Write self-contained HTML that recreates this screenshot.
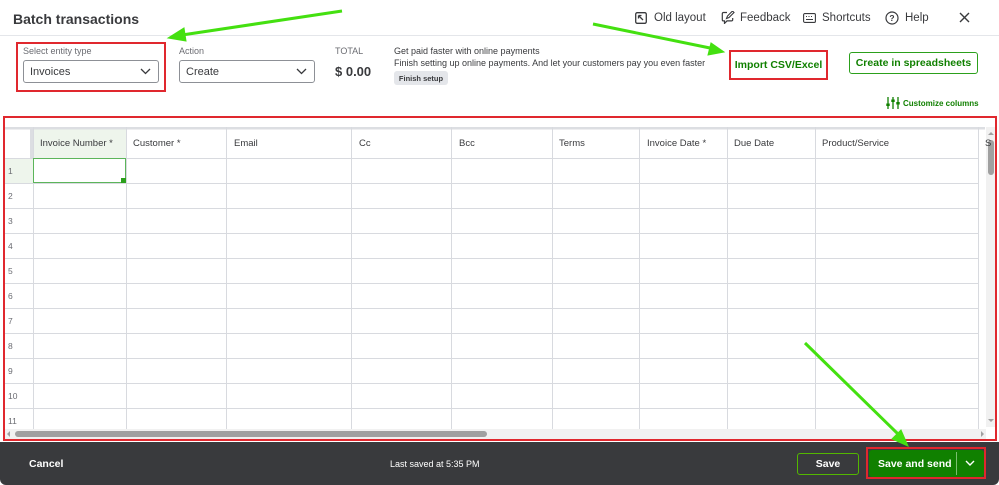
<!DOCTYPE html>
<html><head><meta charset="utf-8"><style>
*{box-sizing:border-box;margin:0;padding:0}
body{width:999px;height:485px;overflow:hidden;background:#fff;font-family:"Liberation Sans",Arial,sans-serif;color:#393a3d;position:relative}
.a{position:absolute;white-space:nowrap}
.sel{position:absolute;border:1px solid #8d9096;border-radius:3px;height:23px;font-size:11px;padding:5px 6px;color:#393a3d}
.sel svg{position:absolute;right:7px;top:7px}
.btn{position:absolute;border:1.5px solid #2ca01c;border-radius:3px;color:#108000;font-weight:bold;font-size:11px;display:flex;align-items:center;justify-content:center}
.hd{font-size:9.5px;color:#393a3d}
.rn{position:absolute;left:8px;font-size:8.5px;color:#6b6c72}
.cen{display:flex;align-items:center;justify-content:center}
</style></head><body>
<div class="a" style="left:13px;top:11px;font-size:14px;font-weight:bold;color:#393a3d">Batch transactions</div>
<div class="a" style="left:0;top:35px;width:999px;height:1px;background:#e4e6ea"></div>
<svg class="a" style="left:635px;top:12px" width="12" height="12" viewBox="0 0 12 12"><rect x="0.7" y="0.7" width="10.6" height="10.6" rx="1.5" fill="none" stroke="#393a3d" stroke-width="1.3"/><path d="M8 8L3.5 3.5M3.5 3.5h3M3.5 3.5v3" stroke="#393a3d" stroke-width="1.3" fill="none"/></svg>
<div class="a" style="left:654px;top:12px;font-size:11.5px">Old layout</div>
<svg class="a" style="left:721px;top:11px" width="14" height="13" viewBox="0 0 14 13"><path d="M6 1.5H2.5A1.2 1.2 0 0 0 1.3 2.7v6a1.2 1.2 0 0 0 1.2 1.2h1v2.5l2.5-2.5h4.5a1.2 1.2 0 0 0 1.2-1.2V7" fill="none" stroke="#393a3d" stroke-width="1.2"/><path d="M5.5 7.5l1-2.5 5-5 1.5 1.5-5 5z" fill="none" stroke="#393a3d" stroke-width="1.1"/></svg>
<div class="a" style="left:740px;top:12px;font-size:11.5px">Feedback</div>
<svg class="a" style="left:803px;top:13px" width="13" height="10" viewBox="0 0 13 10"><rect x="0.6" y="0.6" width="11.8" height="8.8" rx="1.2" fill="none" stroke="#393a3d" stroke-width="1.1"/><path d="M3 3.5h1M5.5 3.5h1M8 3.5h1M3 6.5h7" stroke="#393a3d" stroke-width="1"/></svg>
<div class="a" style="left:822px;top:12px;font-size:11.5px">Shortcuts</div>
<svg class="a" style="left:885px;top:11px" width="14" height="14" viewBox="0 0 14 14"><circle cx="7" cy="7" r="6" fill="none" stroke="#393a3d" stroke-width="1.2"/><text x="7" y="10.2" font-size="8.5" font-weight="bold" text-anchor="middle" fill="#393a3d" font-family="Liberation Sans">?</text></svg>
<div class="a" style="left:905px;top:12px;font-size:11.5px">Help</div>
<svg class="a" style="left:959px;top:12px" width="11" height="11" viewBox="0 0 11 11"><path d="M1 1l9 9M10 1l-9 9" stroke="#393a3d" stroke-width="1.4"/></svg>

<div class="a" style="left:23px;top:46px;font-size:9px;color:#6b6c72">Select entity type</div>
<div class="sel" style="left:23px;top:60px;width:136px">Invoices<svg width="11" height="7" viewBox="0 0 11 7"><path d="M1 1l4.5 4.5L10 1" fill="none" stroke="#393a3d" stroke-width="1.3"/></svg></div>
<div class="a" style="left:16px;top:42px;width:150px;height:50px;border:2px solid #e0282e"></div>
<div class="a" style="left:179px;top:46px;font-size:9px;color:#6b6c72">Action</div>
<div class="sel" style="left:179px;top:60px;width:136px">Create<svg width="11" height="7" viewBox="0 0 11 7"><path d="M1 1l4.5 4.5L10 1" fill="none" stroke="#393a3d" stroke-width="1.3"/></svg></div>
<div class="a" style="left:335px;top:46px;font-size:9px;color:#6b6c72">TOTAL</div>
<div class="a" style="left:335px;top:64px;font-size:13px;font-weight:bold">$ 0.00</div>
<div class="a" style="left:394px;top:46px;font-size:9px">Get paid faster with online payments</div>
<div class="a" style="left:394px;top:58px;font-size:9px">Finish setting up online payments. And let your customers pay you even faster</div>
<div class="a cen" style="left:394px;top:71px;width:54px;height:14px;background:#e4e6ea;border-radius:3px;font-size:7.5px;font-weight:bold">Finish setup</div>
<div class="a cen" style="left:729px;top:50px;width:99px;height:30px;border:2px solid #e0282e;color:#108000;font-weight:bold;font-size:10.5px">Import CSV/Excel</div>
<div class="btn" style="left:849px;top:52px;width:129px;height:22px;font-size:10.5px">Create in spreadsheets</div>
<svg class="a" style="left:886px;top:97px" width="14" height="12" viewBox="0 0 14 12"><path d="M2 0v12M7 0v12M12 0v12" stroke="#108000" stroke-width="1.3"/><rect x="0.3" y="6.5" width="3.4" height="2.5" fill="#108000"/><rect x="5.3" y="2.5" width="3.4" height="2.5" fill="#108000"/><rect x="10.3" y="5" width="3.4" height="2.5" fill="#108000"/></svg>
<div class="a" style="left:903px;top:99px;font-size:8px;color:#108000;font-weight:bold">Customize columns</div>

<svg class="a" style="left:0;top:116px" width="999" height="327" viewBox="0 116 999 327">
<rect x="33" y="127" width="93" height="31" fill="#eef5ec"/>
<rect x="5" y="158" width="28" height="25" fill="#eef5ec"/>
<rect x="5" y="127" width="980" height="2.5" fill="#dcdee2"/>
<rect x="30" y="127" width="3" height="31" fill="#dcdee2"/>
<g stroke="#d8dadf" stroke-width="1">
<path d="M5 158.5H978M5 183.5H978M5 208.5H978M5 233.5H978M5 258.5H978M5 283.5H978M5 308.5H978M5 333.5H978M5 358.5H978M5 383.5H978M5 408.5H978"/>
<path d="M33.5 127V429M126.5 127V429M226.5 127V429M351.5 127V429M451.5 127V429M552.5 127V429M639.5 127V429M727.5 127V429M815.5 127V429M978.5 127V429"/>
</g>
<rect x="33.5" y="158.5" width="92" height="24" fill="none" stroke="#5cb55a" stroke-width="1"/>
<rect x="121" y="178" width="5" height="5" fill="#2ca01c"/>
<rect x="986" y="127" width="11" height="300" fill="#f1f1f1"/>
<rect x="988" y="140" width="6" height="35" rx="3" fill="#a0a0a0"/>
<path d="M988 135l3-3 3 3z M988 419l3 3 3-3z" fill="#a0a0a0"/>
<rect x="4" y="429" width="982" height="10" fill="#f1f1f1"/>
<rect x="15" y="431" width="472" height="6" rx="3" fill="#a0a0a0"/>
<path d="M10 431v6l-3-3z M981 431v6l3-3z" fill="#a0a0a0"/>
</svg>
<div class="a hd" style="left:40px;top:138px">Invoice Number *</div>
<div class="a hd" style="left:133px;top:138px">Customer *</div>
<div class="a hd" style="left:234px;top:138px">Email</div>
<div class="a hd" style="left:359px;top:138px">Cc</div>
<div class="a hd" style="left:459px;top:138px">Bcc</div>
<div class="a hd" style="left:559px;top:138px">Terms</div>
<div class="a hd" style="left:647px;top:138px">Invoice Date *</div>
<div class="a hd" style="left:734px;top:138px">Due Date</div>
<div class="a hd" style="left:822px;top:138px">Product/Service</div>
<div class="a hd" style="left:985px;top:138px">S</div>
<div class="rn" style="top:166px">1</div><div class="rn" style="top:191px">2</div><div class="rn" style="top:216px">3</div><div class="rn" style="top:241px">4</div><div class="rn" style="top:266px">5</div><div class="rn" style="top:291px">6</div><div class="rn" style="top:316px">7</div><div class="rn" style="top:341px">8</div><div class="rn" style="top:366px">9</div><div class="rn" style="top:391px">10</div><div class="rn" style="top:416px">11</div>
<div class="a" style="left:3px;top:116px;width:994px;height:325px;border:2px solid #e0282e"></div>

<div class="a" style="left:0;top:442px;width:999px;height:43px;background:#393a3d;border-radius:0 0 6px 6px"></div>
<div class="a" style="left:29px;top:458px;font-size:10.5px;font-weight:bold;color:#fff">Cancel</div>
<div class="a" style="left:390px;top:459px;font-size:9px;color:#fff">Last saved at 5:35 PM</div>
<div class="a cen" style="left:797px;top:453px;width:62px;height:22px;border:1.5px solid #53b700;border-radius:3px;color:#fff;font-weight:bold;font-size:10.5px">Save</div>
<div class="a" style="left:869px;top:450px;width:115px;height:27px;background:#108000;border-radius:3px"></div>
<div class="a" style="left:878px;top:458px;font-size:10.5px;font-weight:bold;color:#fff">Save and send</div>
<div class="a" style="left:956px;top:452px;width:1px;height:23px;background:#7bbf70"></div>
<svg class="a" style="left:965px;top:460px" width="10" height="7" viewBox="0 0 10 7"><path d="M1 1l4 4 4-4" fill="none" stroke="#fff" stroke-width="1.4"/></svg>
<div class="a" style="left:866px;top:447px;width:120px;height:32px;border:2px solid #e0282e"></div>

<svg class="a" style="left:0;top:0" width="999" height="485">
<g stroke="#44e010" stroke-width="3" fill="#44e010">
<line x1="342" y1="11" x2="182" y2="35"/><path d="M168 38l16-10 2 13z" stroke-width="1"/>
<line x1="593" y1="24" x2="710" y2="48"/><path d="M724 52l-16 3 3-12z" stroke-width="1"/>
<line x1="805" y1="343" x2="898" y2="434"/><path d="M908 446l-16-7 9-9z" stroke-width="1"/>
</g></svg>
</body></html>
